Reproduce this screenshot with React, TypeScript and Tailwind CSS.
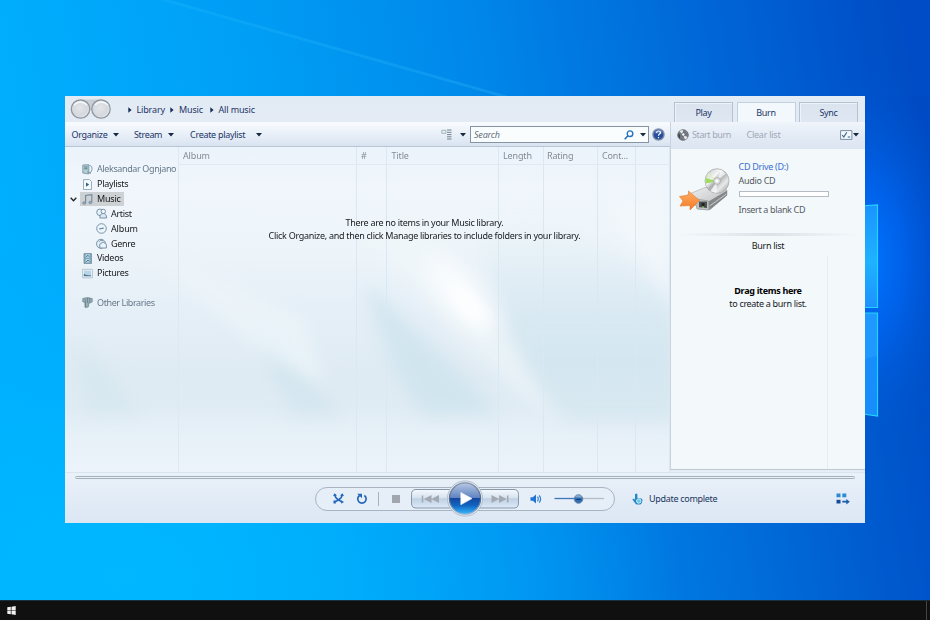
import React from "react";

function Caret({ className = "" }: { className?: string }) {
  return (
    <svg width="6" height="4" viewBox="0 0 6 4" className={"shrink-0 " + className}>
      <path d="M0 0h6L3 3.6z" fill="#17283f" />
    </svg>
  );
}

function Crumb({ children, className = "" }: { children: string; className?: string }) {
  return (
    <span className={"flex items-center whitespace-nowrap " + className}>
      <svg width="4" height="6" viewBox="0 0 4 6" className="mr-[5px] shrink-0">
        <path d="M0.3 0.2v5.6L3.6 3z" fill="#132a55" />
      </svg>
      {children}
    </span>
  );
}

function Wallpaper() {
  return (
    <svg className="absolute inset-0" width="930" height="620" viewBox="0 0 930 620">
      <defs>
        <linearGradient id="sky" x1="0" y1="330" x2="930" y2="170" gradientUnits="userSpaceOnUse">
          <stop offset="0" stopColor="#00b0ff" />
          <stop offset="0.3" stopColor="#00a0f6" />
          <stop offset="0.52" stopColor="#008ceb" />
          <stop offset="0.75" stopColor="#006cda" />
          <stop offset="1" stopColor="#004ac4" />
        </linearGradient>
        <radialGradient id="low" cx="0.13" cy="0.93" r="0.6">
          <stop offset="0" stopColor="#00b8ff" />
          <stop offset="0.4" stopColor="#00b5ff" stopOpacity="0.65" />
          <stop offset="1" stopColor="#00a8ff" stopOpacity="0" />
        </radialGradient>
        <radialGradient id="glow" cx="866" cy="260" r="190" gradientUnits="userSpaceOnUse" gradientTransform="translate(866 0) scale(.5 1) translate(-866 0)">
          <stop offset="0" stopColor="#0076ff" />
          <stop offset="0.4" stopColor="#0068f6" stopOpacity="0.7" />
          <stop offset="1" stopColor="#0055d0" stopOpacity="0" />
        </radialGradient>
        <linearGradient id="pane" x1="0" y1="0" x2="0" y2="1">
          <stop offset="0" stopColor="#1a94ff" />
          <stop offset="0.55" stopColor="#1fb2ff" />
          <stop offset="1" stopColor="#1c92ff" />
        </linearGradient>
        <linearGradient id="beam" x1="160" y1="0" x2="510" y2="96" gradientUnits="userSpaceOnUse">
          <stop offset="0" stopColor="#36c2ff" stopOpacity="0.16" />
          <stop offset="1" stopColor="#3cbcff" stopOpacity="0.26" />
        </linearGradient>
      </defs>
      <rect width="930" height="620" fill="url(#sky)" />
      <rect width="930" height="620" fill="url(#low)" />
      <rect x="700" y="50" width="230" height="420" fill="url(#glow)" />
      <path d="M170 0 508 96h-10L160 0z" fill="url(#beam)" />
      <path d="M170 0 508 96H930V0z" fill="#0072e8" opacity="0.05" />
      <path d="M860 206 877.5 205V307.5H860z" fill="url(#pane)" stroke="#22d4ff" strokeWidth="1.2" />
      <path d="M860 313H877.5V416L860 413.5z" fill="#1f98ff" stroke="#22d4ff" strokeWidth="1.2" />
      <path d="M860 360 877 356V415L860 413z" fill="#1487fa" opacity="0.6" />
    </svg>
  );
}

function Aurora() {
  return (
    <svg className="absolute inset-0" width="605" height="325" viewBox="0 0 605 325">
      <defs>
        <linearGradient id="base" x1="0" y1="0" x2="0" y2="1">
          <stop offset="0" stopColor="#ebf3fb" />
          <stop offset="0.12" stopColor="#f0f6fb" />
          <stop offset="0.3" stopColor="#eef5fa" />
          <stop offset="0.5" stopColor="#e5eff7" />
          <stop offset="0.7" stopColor="#dfebf3" />
          <stop offset="0.8" stopColor="#e0ecf4" />
          <stop offset="0.9" stopColor="#e8f1f8" />
          <stop offset="1" stopColor="#ecf3fb" />
        </linearGradient>
        <linearGradient id="deep" x1="0" y1="0" x2="0" y2="1">
          <stop offset="0" stopColor="#d0e5ef" stopOpacity="0" />
          <stop offset="0.7" stopColor="#d0e5ef" stopOpacity="0.8" />
          <stop offset="1" stopColor="#d4e6f0" stopOpacity="0.6" />
        </linearGradient>
        <filter id="soft" x="-30%" y="-30%" width="160%" height="160%"><feGaussianBlur stdDeviation="8" /></filter>
        <filter id="softer" x="-60%" y="-60%" width="220%" height="220%"><feGaussianBlur stdDeviation="12" /></filter>
      </defs>
      <rect width="605" height="325" fill="url(#base)" />
      <g filter="url(#soft)">
        <path d="M10 195C35 215 60 240 75 265L20 268z" fill="#d2e6ef" opacity="0.6" />
        <path d="M198 175C225 213 252 240 278 265L232 268C212 250 200 215 198 175z" fill="#cfe4ee" opacity="0.65" />
        <path d="M300 135C340 175 392 222 432 266L362 268C332 240 315 190 300 135z" fill="#cce3ee" opacity="0.75" />
        <path d="M410 70C470 70 560 85 610 170V275H505C465 230 430 170 410 70z" fill="url(#deep)" />
        <path d="M290 80C335 125 375 180 420 215L490 275C450 210 420 140 350 75z" fill="#f0f6fa" opacity="0.6" />
        <path d="M80 100C135 160 195 205 260 240L240 170C190 150 130 110 80 100z" fill="#edf5fa" opacity="0.7" />
        <path d="M540 60 605 150V50z" fill="#f3f8fb" opacity="0.6" />
      </g>
      <ellipse cx="396" cy="147" rx="17" ry="48" transform="rotate(-42 396 147)" fill="#fff" opacity="0.8" filter="url(#softer)" />
      <ellipse cx="404" cy="160" rx="9" ry="24" transform="rotate(-42 404 160)" fill="#fff" opacity="0.8" filter="url(#soft)" />
    </svg>
  );
}

type IconName = "user" | "playlist" | "music" | "artist" | "album" | "genre" | "video" | "picture" | "other";

function TreeIcon({ name }: { name: IconName }) {
  const s = { fill: "none", stroke: "#6d8aa3", strokeWidth: 0.9 };
  return (
    <svg width="11" height="11" viewBox="0 0 11 11" className="shrink-0">
      {name === "user" && (
        <g>
          <path d="M.8 1 6.8.7v9.2L.8 9z" fill="#b9ced6" stroke="#6f8e98" strokeWidth="0.8" />
          <path d="M2.2 3h3.4M2.2 4.8h3.4" stroke="#4f7c89" />
          <path d="M7.5 1.5c3 .2 3.5 4.5.5 7.5M5 7.5l4 2" {...s} />
        </g>
      )}
      {name === "playlist" && (
        <g>
          <path d="M1.5.6h6L9.5 2.5v8h-8z" fill="#f4f9fc" stroke="#8fa5b5" strokeWidth="0.9" />
          <path d="M4 3.5v4.2L7.2 5.6z" fill="#2d6388" />
        </g>
      )}
      {name === "music" && (
        <g fill="#93a9bb" stroke="#71899d" strokeWidth="0.7">
          <path d="M3.6 8.5V1.4L9.8.6v7.3" fill="none" strokeWidth="1.1" />
          <ellipse cx="2.3" cy="9" rx="1.6" ry="1.3" />
          <ellipse cx="8.4" cy="8.5" rx="1.6" ry="1.3" />
        </g>
      )}
      {name === "artist" && (
        <g {...s}>
          <circle cx="4" cy="4.3" r="3.3" fill="#e8f1f8" />
          <circle cx="7.3" cy="3.4" r="2.2" fill="#f3f8fc" />
          <path d="M3.8 10c.1-3.5 1.5-4.5 3.4-4.5 2 0 3.3 1.2 3.4 4.5z" fill="#dbe8f2" />
        </g>
      )}
      {name === "album" && (
        <g {...s}>
          <circle cx="5.5" cy="5.5" r="4.8" fill="#edf4fa" />
          <path d="M3.3 5.8 7.7 5.2" strokeWidth="1.3" />
        </g>
      )}
      {name === "genre" && (
        <g {...s}>
          <circle cx="5" cy="5.8" r="4.5" fill="#e3eef6" />
          <path d="M3.8 10V6.2L7 4l3.4 2.3V10z" fill="#edf4fa" />
          <path d="M3 3.8c1-1.4 2.6-1.8 4-1.2" />
        </g>
      )}
      {name === "video" && (
        <g>
          <path d="M2 .5h7.5v10H2z" fill="#7fa6ba" stroke="#788f9d" strokeWidth="0.8" />
          <path d="M3.7 1.3h4v3.5h-4zM3.7 6h4v3.6h-4z" fill="#b7d8e6" />
          <path d="M4.2 3.8 6 2.3l1.3 1.5M4.3 8.8 6 7l1.4 1.5" fill="none" stroke="#315f79" strokeWidth="0.8" />
        </g>
      )}
      {name === "picture" && (
        <g>
          <path d="M.6 1.3h9.8v8.5H.6z" fill="#f5f9fb" stroke="#a4b7c2" strokeWidth="0.8" />
          <path d="M1.8 2.5h7.3v5.8H1.8z" fill="#b7d5e6" />
          <path d="M1.8 8.3V5.7l2 1 2.4.5 2.9.1v1z" fill="#497996" />
        </g>
      )}
      {name === "other" && (
        <g>
          <path d="M.8 1.5 5.5.6l4.7 1v3.3L7 6.2V5.6L6.2 10 3 10.4V5.5L.8 4.7z" fill="#98afb9" stroke="#70858f" strokeWidth="0.8" />
          <path d="M3.4 2v8M5.5 1v5M7.7 1v4" stroke="#5f7b88" strokeWidth="0.7" />
        </g>
      )}
    </svg>
  );
}

function TreeRow({ icon, label, nested, muted, selected, className = "" }: { icon: IconName; label: string; nested?: boolean; muted?: boolean; selected?: boolean; className?: string }) {
  return (
    <div className={"flex h-[14.85px] items-center " + (nested ? "pl-[31px] " : selected ? "pl-[5px] " : "pl-[17px] ") + className}>
      {selected && (
        <svg width="7" height="5" viewBox="0 0 7 5" className="mr-[3px] shrink-0">
          <path d="M.7.8 3.5 3.8 6.3.8" fill="none" stroke="#222" strokeWidth="1.3" />
        </svg>
      )}
      <div className={"flex h-[14px] items-center whitespace-nowrap " + (selected ? "bg-[#cdd1d4] pl-[2px] pr-[3px]" : "") + (muted ? " text-[#68798b]" : " text-[#17191c]")}>
        <TreeIcon name={icon} />
        <span className="ml-[4px]">{label}</span>
      </div>
    </div>
  );
}

function Tab({ label, active }: { label: string; active?: boolean }) {
  return (
    <div className={"flex h-[20px] w-[59px] items-center justify-center border border-b-0 text-[#1d3567] " + (active ? "border-[#c3d0de] bg-[#f3f8fd]" : "border-[#b6c2d0] bg-linear-to-b from-[#dbe4ee] to-[#dfe8f2] shadow-[inset_1px_1px_0_#edf3f8]")}>
      {label}
    </div>
  );
}

function CdDrive() {
  return (
    <svg width="52" height="48" viewBox="0 0 52 48" className="shrink-0">
      <defs>
        <linearGradient id="disc" x1="0" y1="0" x2="1" y2="1">
          <stop offset="0" stopColor="#b7bbbd" />
          <stop offset="0.35" stopColor="#f6f6f6" />
          <stop offset="0.5" stopColor="#a9acae" />
          <stop offset="0.7" stopColor="#e9e9e9" />
          <stop offset="1" stopColor="#8c9092" />
        </linearGradient>
        <linearGradient id="metal" x1="0" y1="0" x2="1" y2="1">
          <stop offset="0" stopColor="#f1f1f1" />
          <stop offset="1" stopColor="#b5b7b9" />
        </linearGradient>
        <linearGradient id="arrow" x1="0" y1="0" x2="0" y2="1">
          <stop offset="0" stopColor="#ffae67" />
          <stop offset="1" stopColor="#f47a23" />
        </linearGradient>
      </defs>
      <path d="M8 29 26 21.5 48 24 48 29 31 43.5 20 43z" fill="url(#metal)" stroke="#a2a5a7" strokeWidth="0.6" />
      <path d="M29.5 35.5 48 24.5V29.5L30.5 44z" fill="#858889" />
      <path d="M30.5 40 47.5 28" stroke="#c9cbcc" />
      <path d="M15 32.5 29.5 35 30 44 18 43z" fill="#c0c3c4" stroke="#8d9091" strokeWidth="0.6" />
      <path d="M20 35.5h8v6.5l-8-.8z" fill="#4d5250" />
      <path d="M22.5 37h3v3.6h-3z" fill="#1f2524" />
      <path d="M23 41h2" stroke="#a7db7c" />
      <ellipse cx="38" cy="15" rx="12" ry="12.3" fill="url(#disc)" stroke="#a2a5a7" strokeWidth="0.7" />
      <path d="M38 15 42 3.8 47 7.5z" fill="#fff" opacity="0.7" />
      <path d="M38 15 31.5 25.2 37.5 27z" fill="#fff" opacity="0.7" />
      <path d="M38 15 26.4 12 27 17.5z" fill="#9fdc5c" />
      <path d="M38 15 27.5 10 29.5 7z" fill="#dff0c6" opacity="0.8" />
      <circle cx="38" cy="15" r="3.4" fill="#dcdedf" stroke="#989b9d" strokeWidth="0.6" />
      <circle cx="38" cy="15" r="1.4" fill="#fff" />
      <path d="M.5 30.5 9.5 29V25L20.5 34.5 11 44V39.5L1 40 4 35z" fill="url(#arrow)" stroke="#e58138" strokeWidth="0.7" />
    </svg>
  );
}

function Transport() {
  return (
    <svg width="112" height="37" viewBox="0 0 112 37" className="shrink-0">
      <defs>
        <linearGradient id="btn" x1="0" y1="0" x2="0" y2="1">
          <stop offset="0" stopColor="#f5f9fd" />
          <stop offset="0.45" stopColor="#d7e3ef" />
          <stop offset="0.5" stopColor="#bfd1e3" />
          <stop offset="1" stopColor="#ddeafa" />
        </linearGradient>
        <linearGradient id="play" x1="0" y1="0" x2="0" y2="1">
          <stop offset="0" stopColor="#b7c8e4" />
          <stop offset="0.48" stopColor="#5f82c0" />
          <stop offset="0.5" stopColor="#1548a0" />
          <stop offset="0.72" stopColor="#1165c0" />
          <stop offset="1" stopColor="#35b9ff" />
        </linearGradient>
        <linearGradient id="ring" x1="0" y1="0" x2="0" y2="1">
          <stop offset="0" stopColor="#8491a5" />
          <stop offset="0.5" stopColor="#506786" />
          <stop offset="1" stopColor="#8cb2d8" />
        </linearGradient>
      </defs>
      <path d="M7 9.5H42V28H7Q2.5 28 2.5 23V14.5Q2.5 9.5 7 9.5z" fill="url(#btn)" stroke="#8797ab" strokeWidth="1" />
      <path d="M105 9.5H70V28H105Q109.5 28 109.5 23V14.5Q109.5 9.5 105 9.5z" fill="url(#btn)" stroke="#8797ab" strokeWidth="1" />
      <path d="M13.5 15.5v7" stroke="#a2a9b2" strokeWidth="1.5" />
      <path d="M30 15v8L22.5 19zM22.5 15v8L15 19z" fill="#a2a9b2" />
      <path d="M98.7 15.5v7" stroke="#a2a9b2" strokeWidth="1.5" />
      <path d="M82.5 15v8L90 19zM90 15v8L97.5 19z" fill="#a2a9b2" />
      <circle cx="56" cy="18.5" r="17.6" fill="#dce6f0" stroke="#a9b6c5" strokeWidth="0.8" />
      <circle cx="56" cy="18.5" r="15.6" fill="url(#play)" stroke="url(#ring)" strokeWidth="1.2" />
      <path d="M51.8 12.4 63 18.6 51.8 24.8z" fill="#fff" stroke="#e8f0f8" strokeWidth="0.6" strokeLinejoin="round" />
    </svg>
  );
}

function LibraryPane() {
  const cols = [
    ["Album", "w-[178px] pl-[4px]"],
    ["#", "w-[30px] pl-[4px]"],
    ["Title", "w-[112px] pl-[4.5px]"],
    ["Length", "w-[45px] pl-[4px]"],
    ["Rating", "w-[54px] pl-[3px]"],
    ["Cont...", "w-[38px] pl-[4px]"],
    ["", "w-[34px]"],
  ];
  return (
    <div className="relative h-[325px] w-[605px]">
      <Aurora />
      <div className="relative flex h-full">
        <div className="w-[114px] border-r border-[#dde8f0] pt-[14.9px]">
          <TreeRow icon="user" label="Aleksandar Ognjano" muted className="tracking-[-0.38px]" />
          <TreeRow icon="playlist" label="Playlists" />
          <TreeRow icon="music" label="Music" selected className="tracking-[-0.2px]" />
          <TreeRow icon="artist" label="Artist" nested />
          <TreeRow icon="album" label="Album" nested className="tracking-[-0.15px]" />
          <TreeRow icon="genre" label="Genre" nested />
          <TreeRow icon="video" label="Videos" />
          <TreeRow icon="picture" label="Pictures" />
          <TreeRow icon="other" label="Other Libraries" muted className="mt-[14.8px] tracking-[-0.4px]" />
        </div>
        <div className="relative flex flex-1">
          {cols.map(([label, cls], i) => (
            <div key={i} className={"h-full border-r border-[#d9e8f2] text-[#838b94] " + cls}>
              <div className="flex h-[17px] items-center whitespace-nowrap tracking-[-0.15px]">{label}</div>
            </div>
          ))}
          <div className="absolute inset-x-0 top-[17px] h-px bg-[#e0eaf3]" />
          <div className="absolute inset-x-0 top-[69px] text-center leading-[13.4px] tracking-[-0.29px] text-[#17191c]">
            <p>There are no items in your Music library.</p>
            <p>Click Organize, and then click Manage libraries to include folders in your library.</p>
          </div>
        </div>
      </div>
    </div>
  );
}

function BurnPane() {
  return (
    <div className="w-[195px]">
      <div className="flex h-[26px] items-end gap-[3.5px] bg-[#e3ebf4] pl-[4px]">
        <Tab label="Play" />
        <Tab label="Burn" active />
        <Tab label="Sync" />
      </div>
      <div className="flex h-[27px] items-center border-l border-[#c8d3df] bg-linear-to-b from-[#f0f5fb] via-[#e3ebf5] to-[#dbe5f1] pb-[2px] pl-[6px] pr-[6px] text-[#a0a9b4]">
        <svg width="12" height="12" viewBox="0 0 12 12" className="mr-[3px]">
          <circle cx="6" cy="6" r="5.3" fill="#777c83" stroke="#5e646d" strokeWidth="0.8" />
          <path d="M6 6 2.5 2.2A5 5 0 0 1 5.8.9zM6 6l4.6 2A5 5 0 0 1 8 10.7z" fill="#e5e8ea" />
          <path d="M1.3 5.5C3 3.5 3.5 6 3 9.5 1.5 8.5 1 7 1.3 5.5z" fill="#41474f" />
          <circle cx="6.3" cy="5.5" r="1.7" fill="#f5f6f7" stroke="#43474c" strokeWidth="0.6" />
        </svg>
        <span className="w-[54.5px] whitespace-nowrap tracking-[-0.4px]">Start burn</span>
        <span className="whitespace-nowrap tracking-[-0.25px]">Clear list</span>
        <svg width="13" height="10" viewBox="0 0 13 10" className="ml-auto">
          <path d="M.6.6h11.3v8.8H.6z" fill="#f4f8fb" stroke="#6c8599" strokeWidth="0.9" />
          <path d="m2.3 5 1.5 2L6.8 2.2M7.8 7h2.4" fill="none" stroke="#2d638b" strokeWidth="1.1" />
        </svg>
        <Caret />
      </div>
      <div className="h-[321px] border-b border-l border-b-[#bdc8d3] border-l-[#c8d3df] bg-[#f3f8fb] text-[#555b63]">
        <div className="flex h-[84px] pt-[11px]">
          <div className="ml-[8px] mt-[6px] w-[59.5px]"><CdDrive /></div>
          <div className="flex flex-col whitespace-nowrap">
            <span className="h-[14px] leading-[14px] text-[#3a6fd0]">CD Drive (D:)</span>
            <span className="h-[14px] leading-[14px]">Audio CD</span>
            <div className="mt-[3px] h-[6px] w-[90px] border border-[#b4bbc2] bg-white" />
            <span className="mt-[6px] leading-[14px] tracking-[-0.35px]">Insert a blank CD</span>
          </div>
        </div>
        <div className="mx-[6px] h-[3px] bg-linear-to-r from-transparent via-[#dbe2e7] to-transparent" />
        <div className="mt-[3px] text-center leading-[14px] text-[#17191c]">Burn list</div>
        <div className="mr-[37px] mt-[3px] h-[213px] border-r border-[#e5edf2] pt-[28px] text-[#17191c]">
          <div className="ml-[39px] w-[116px] text-center leading-[13.4px]">
            <p className="font-bold text-black">Drag items here</p>
            <p className="tracking-[-0.32px]">to create a burn list.</p>
          </div>
        </div>
      </div>
    </div>
  );
}

function PlayerBar() {
  return (
    <div className="h-[51px] border-t border-[#dbe4ec] bg-linear-to-b from-[#e9f1f9] to-[#dce7f4]">
      <div className="mx-[10px] mt-[3px] h-[3px] rounded-full border border-[#a4b0ba] bg-[#e9f1f5]" />
      <div className="mt-[1px] flex h-[37px] items-center">
        <div className="ml-[250px] flex h-[24px] w-[300px] items-center rounded-full border border-[#a8b4c2] bg-[#e6eef7]">
          <svg width="11" height="11" viewBox="0 0 11 11" className="ml-[17px]">
            <path d="M1.8 1.5C2 4.8 3.4 5.6 5.3 6.8 6.8 7.8 7.6 8.6 9 8.8M9.2 1.5C9 4.8 7.6 5.6 5.7 6.8 4.2 7.8 3.4 8.6 2 8.8" fill="none" stroke="#2368ba" strokeWidth="1.6" />
            <path d="M0 3 1.5.2 4 2.4zM11 3 9.5.2 7 2.4zM.5 7.6h2.3v2.8H.5zM8.2 7.2 11 9 8.2 10.8z" fill="#2368ba" />
          </svg>
          <svg width="12" height="12" viewBox="0 0 12 12" className="ml-[12px]">
            <path d="M8.3 2.5a4.2 4.2 0 1 1-4.7 0" fill="none" stroke="#2367b6" strokeWidth="1.7" />
            <path d="M1.2.8H6v4.4z" fill="#2367b6" />
          </svg>
          <div className="ml-[10px] h-[14px] w-px bg-[#a7b2bf]" />
          <div className="ml-[13px] h-[8px] w-[8px] bg-[#a1a7ae]" />
          <div className="ml-[9px]"><Transport /></div>
          <svg width="12" height="10" viewBox="0 0 12 10" className="ml-[9px]">
            <path d="M.5 3.3h2.3L6 .4v9.2L2.8 6.7H.5z" fill="#1f74d4" />
            <path d="M7.5 2.7q1.5 2.3 0 4.6M9.3 1.4q2.6 3.6 0 7.2" fill="none" stroke="#2f81d6" strokeWidth="1.2" />
          </svg>
          <svg width="52" height="12" viewBox="0 0 52 12" className="ml-[10.5px]">
            <path d="M1.5 5.5h25" stroke="#4075b7" strokeWidth="1.3" />
            <path d="M26 5.5h25" stroke="#b3becb" strokeWidth="1.3" />
            <circle cx="25.5" cy="6" r="4.3" fill="#2f6eb3" stroke="#637f9f" strokeWidth="0.8" />
            <path d="M21.8 4.5a4 4 0 0 1 7.4 0z" fill="#86a9d0" />
            <path d="M22.5 7q3-2.5 6 0z" fill="#0d3c70" />
          </svg>
        </div>
        <svg width="11" height="12" viewBox="0 0 11 12" className="ml-[17px]">
          <path d="M3 1.2q1.6-1.4 2.4.3V5l3.8.6q1.4.4 1.2 2.2L9.8 10q-.6 1.6-2.3 1.6H5.3Q3.8 11.5 3 10L.6 6.8Q.3 5.4 2 5.8l1 1z" fill="#2488c5" />
          <circle cx="6.7" cy="8" r="2.2" fill="#65c5e6" stroke="#dff3fa" strokeWidth="0.9" />
        </svg>
        <span className="ml-[6px] whitespace-nowrap text-[#22365e]">Update complete</span>
        <svg width="14" height="12" viewBox="0 0 14 12" className="ml-auto mr-[15px]">
          <path d="M.5.5h4v3.7h-4zM6.3.5h4v3.7h-4z" fill="#2c8ad2" />
          <path d="M.5 6.8h4v3.7h-4z" fill="#174c96" />
          <path d="M6.3 7.8h4V5.9l3.5 2.8-3.5 2.8V9.6h-4z" fill="#1b5cad" />
        </svg>
      </div>
    </div>
  );
}

export default function App() {
  return (
    <div className="relative flex h-[620px] w-[930px] flex-col overflow-hidden font-['Noto_Sans','Open_Sans',sans-serif] text-[9px] leading-[12px] tracking-[-0.3px]">
      <Wallpaper />
      <div className="relative ml-[65px] mt-[96px] h-[427px] w-[800px] bg-[#e5edf6]">
        <div className="flex h-[376px]">
          <div className="w-[605px]">
            <div className="flex h-[26px] items-center bg-linear-to-b from-[#e2ebf4] to-[#e4ebf4] text-[#1d3567]">
              <svg width="42" height="22" viewBox="0 0 42 22" className="ml-[5px] shrink-0">
                <defs>
                  <radialGradient id="nav" cx="0.45" cy="0.45" r="0.6">
                    <stop offset="0" stopColor="#e2e6e9" />
                    <stop offset="0.7" stopColor="#d5d9de" />
                    <stop offset="1" stopColor="#f1f3f5" />
                  </radialGradient>
                </defs>
                <path d="M10 1.5h22v11H10z" fill="#c8cfd6" />
                <circle cx="10.5" cy="11" r="9.2" fill="url(#nav)" stroke="#8b939c" strokeWidth="1.2" />
                <circle cx="31" cy="11" r="9.2" fill="url(#nav)" stroke="#8b939c" strokeWidth="1.2" />
                <path d="M4 7q6-6 13 0M25 7q6-6 13 0" fill="none" stroke="#f7f9fa" strokeWidth="1.3" />
              </svg>
              <div className="ml-[15.5px] flex pt-[2px] tracking-[-0.15px]">
                <Crumb className="w-[42.5px]">Library</Crumb>
                <Crumb className="w-[39.5px]">Music</Crumb>
                <Crumb>All music</Crumb>
              </div>
            </div>
            <div className="flex h-[25px] items-center border-b border-t border-b-[#b7c5d7] border-t-[#f7fafd] bg-linear-to-b from-[#f8fbfe] via-[#e8eff8] to-[#d9e4f1] text-[#1d3567]">
              <span className="ml-[6.5px] w-[41.5px] whitespace-nowrap">Organize</span>
              <Caret />
              <span className="ml-[15px] w-[34px] whitespace-nowrap tracking-[-0.35px]">Stream</span>
              <Caret />
              <span className="ml-[16px] w-[66px] whitespace-nowrap">Create playlist</span>
              <Caret />
              <svg width="11" height="11" viewBox="0 0 11 11" className="ml-auto mr-[8px]">
                <path d="M.8 1.3h4v3h-4z" fill="#edf3f5" stroke="#91a1ac" strokeWidth="0.8" />
                <path d="M6 1h4.5M6 3.3h4.5M6 5.6h4.5M6 7.8h4.5M6 10h4.5" stroke="#73838e" />
              </svg>
              <Caret />
              <div className="ml-[4px] flex h-[17px] w-[179px] items-center border border-[#8794a3] bg-[#fafdfe] pl-[3px] pr-[2px] italic tracking-[-0.2px] text-[#67717c]">
                Search
                <svg width="10" height="10" viewBox="0 0 10 10" className="ml-auto mr-[6px]">
                  <circle cx="6" cy="3.7" r="2.8" fill="none" stroke="#2973bd" strokeWidth="1.4" />
                  <path d="M4 5.8.7 9.2" stroke="#2367ae" strokeWidth="1.5" />
                </svg>
                <Caret />
              </div>
              <svg width="13" height="13" viewBox="0 0 13 13" className="ml-[3px] mr-[5px]">
                <circle cx="6.5" cy="6.5" r="5.6" fill="#274e9c" stroke="#8491a8" strokeWidth="1.3" />
                <path d="M2.5 5.5a4 4 0 0 1 8 0z" fill="#6e8fc9" opacity="0.65" />
                <path d="M4.5 5q.2-2 2-2 2 0 2 1.6 0 1-1.2 1.7-.8.4-.8 1.4M6.5 9v1.2" fill="none" stroke="#fff" strokeWidth="1.2" />
              </svg>
            </div>
            <LibraryPane />
          </div>
          <BurnPane />
        </div>
        <PlayerBar />
      </div>
      <div className="relative mt-auto flex h-[20px] items-center border-t border-[#17303d] bg-[#101010] pl-[7px]">
        <svg width="9" height="9" viewBox="0 0 9 9">
          <path d="M.3 1.3 3.8.8v3.4H.3zM4.5.7 8.7 0v4.2H4.5zM.3 4.8h3.5v3.4L.3 7.7zM4.5 4.8h4.2V9l-4.2-.7z" fill="#f2f2f2" />
        </svg>
        <div className="ml-auto h-full w-[4px] border-l border-[#444]" />
      </div>
    </div>
  );
}
